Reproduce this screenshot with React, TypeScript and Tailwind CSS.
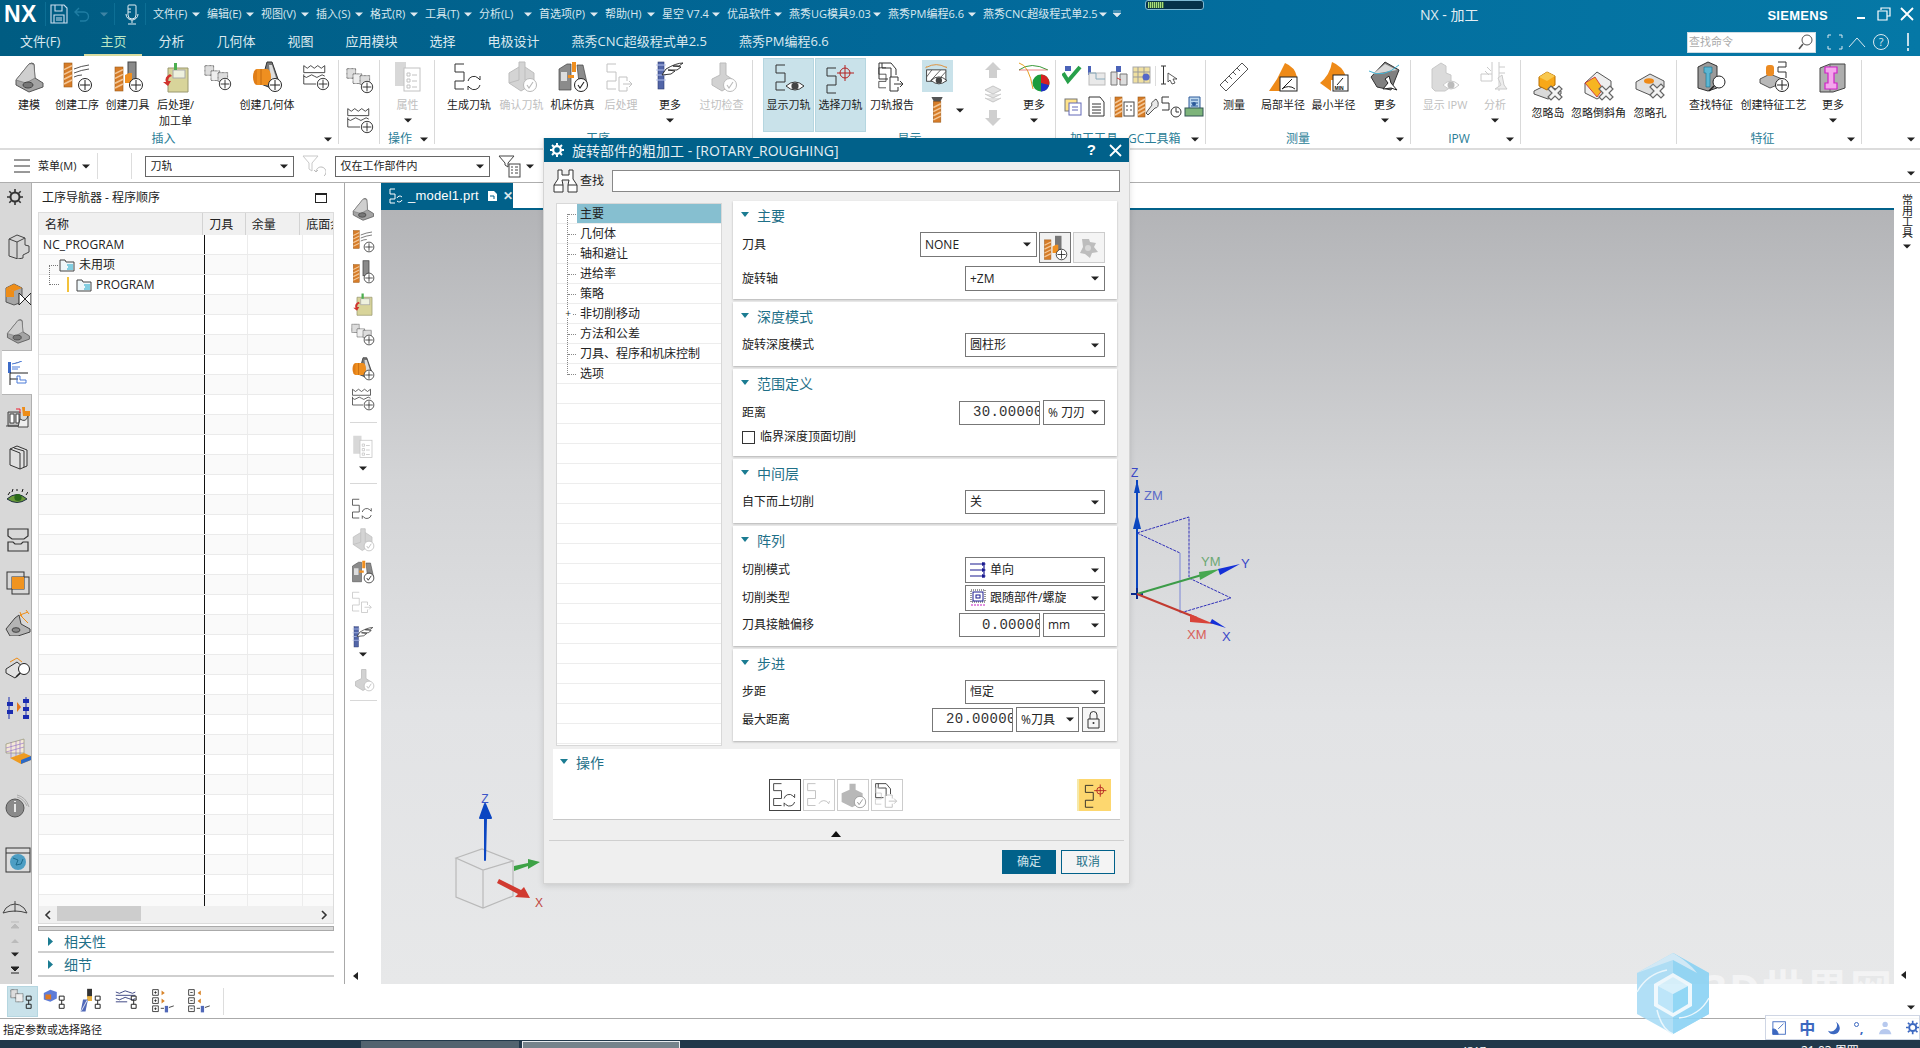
import React from "react";

type C = { children?: React.ReactNode };
const S = ({ children, s = 32, box = 32 }: C & { s?: number; box?: number }) => (
  <svg width={s} height={s} viewBox={`0 0 ${box} ${box}`} className="block shrink-0">{children}</svg>
);
const Plus = ({ x = 24, y = 24, r = 6.5 }: { x?: number; y?: number; r?: number }) => (
  <g>
    <circle cx={x} cy={y} r={r} fill="#fff" stroke="#222" strokeWidth="1" />
    <path d={`M${x} ${y - r + 1.5}v${2 * r - 3}M${x - r + 1.5} ${y}h${2 * r - 3}`} stroke="#222" strokeWidth="1" />
  </g>
);
const Check = ({ x = 24, y = 24, r = 6.5, c = "#222" }: { x?: number; y?: number; r?: number; c?: string }) => (
  <g>
    <circle cx={x} cy={y} r={r} fill="#fff" stroke={c} strokeWidth="1" />
    <path d={`M${x - 3} ${y}l2 3l4 -6`} stroke={c} fill="none" strokeWidth="1.1" />
  </g>
);
const X = ({ x = 23, y = 23 }: { x?: number; y?: number }) => (
  <path transform={`translate(${x} ${y})`} d="M-7 -4l3-3l4 4l4-4l3 3l-4 4l4 4l-3 3l-4-4l-4 4l-3-3l4-4z" fill="#f4f4f4" stroke="#666" strokeWidth="1.2" />
);
const Mill = ({ x = 3, y = 2, w = 8, h = 24 }: { x?: number; y?: number; w?: number; h?: number }) => (
  <g>
    <rect x={x} y={y} width={w} height={h} fill="#d67c28" stroke="#9a5a1a" strokeWidth=".6" />
    {[0.15, 0.35, 0.55, 0.75].map((k) => (
      <path key={k} d={`M${x} ${y + h * k + 3}L${x + w} ${y + h * k - 1}`} stroke="#f3c796" strokeWidth="1.6" />
    ))}
  </g>
);
const Snake = ({ x = 0, y = 0, c = "#333", k = 1 }: { x?: number; y?: number; c?: string; k?: number }) => (
  <path transform={`translate(${x} ${y}) scale(${k})`} d="M10 1H1v8h9v9H1v8h9" fill="none" stroke={c} strokeWidth="1" />
);
const Refresh = ({ c = "#333" }: { c?: string }) => (
  <path d="M15 20a6 6 0 0 1 10-3l2 2v-4M27 24a6 6 0 0 1-10 3l-2-2v4" fill="none" stroke={c} strokeWidth="1" />
);
const Eye = ({ x = 22, y = 23 }: { x?: number; y?: number }) => (
  <g>
    <path d={`M${x - 9} ${y}q9-8 18 0q-9 8-18 0z`} fill="#fff" stroke="#333" strokeWidth="1" />
    <circle cx={x} cy={y} r="3.6" fill="#444" />
  </g>
);
const DocArrow = ({ c = "#333" }: { c?: string }) => (
  <g fill="none" stroke={c} strokeWidth="1">
    <path d="M14 16h8v4M14 16v14h8v-4M18 23h9l-3-3M27 23l-3 3" />
  </g>
);
const Sheets = () => (
  <g stroke="#333" strokeWidth=".8" strokeDasharray="1 .5">
    <rect x="1" y="3" width="10" height="11" fill="#ddd" />
    <rect x="8" y="9" width="10" height="11" fill="#eee" />
    <rect x="16" y="11" width="11" height="10" fill="#ddd" />
  </g>
);
const Crown = () => (
  <g fill="none" stroke="#333" strokeWidth="1">
    <path d="M2 3l4 3l4-3l4 3l4-3l4 3l4-3v8H2z" fill="#fff" />
    <path d="M2 15q3 3 6 0t6 0t6 0t6 0M2 13v11h14" />
  </g>
);
const Bracket = () => (
  <g>
    <path d="M3 19L16 3q3-2 5 0l1 14l8 5v4l-14 5L3 24z" fill="#a4a4a4" stroke="#555" />
    <path d="M16 3q3-1 5 1l1 13l-9 5l-10-3z" fill="#cfcfcf" stroke="#666" strokeWidth=".6" />
    <ellipse cx="15" cy="24" rx="5" ry="3" fill="#777" stroke="#444" />
  </g>
);
const Post = () => (
  <g>
    <path d="M8 7h20v24H8z" fill="#d8d49a" stroke="#9a9870" />
    <rect x="13" y="9" width="12" height="8" fill="#eef1de" stroke="#aaa" />
    <path d="M14 2h3v7h-3z" fill="#4caf50" />
    <path d="M10 13q-6 3-4 8h-3l5 4l3-5h-3q0-4 4-5z" fill="#d0332e" />
  </g>
);
const GeoBlock = () => (
  <g>
    <path d="M16 1l5 0l7 20l-8 6l-10-4z" fill="#777" stroke="#333" />
    <path d="M18 4l3 0l5 16l-6 3z" fill="#ddd" />
    <ellipse cx="6" cy="16" rx="4" ry="8" fill="#e07d17" />
    <path d="M6 8h10a4 8 0 0 1 0 16H6z" fill="#ef8f20" />
    <path d="M10 8v16" stroke="#c36a10" />
  </g>
);
const MachineDim = () => (
  <g fill="#d4d4d4" stroke="#bdbdbd">
    <path d="M3 12l10-6v-5h6v5l9 6v10l-13 8l-12-8z" />
    <path d="M13 6v13l-10 3M19 6v13l9 3" fill="none" />
  </g>
);
const Sim = () => (
  <g>
    <path d="M2 8l8-5h4v26H2zM20 4h6l4 18h-8z" fill="#8b8b8b" stroke="#444" strokeWidth=".7" />
    <rect x="4" y="11" width="6" height="9" fill="#ddd" />
    <rect x="15" y="1" width="4" height="10" fill="#ef8f20" />
    <rect x="11" y="14" width="6" height="3" fill="#ef8f20" />
  </g>
);
const BlueFan = () => (
  <g>
    <rect x="4" y="1" width="6" height="27" fill="#5265a8" stroke="#2d3a70" strokeWidth=".6" />
    {[4, 9, 14, 19].map((y) => <path key={y} d={`M2 ${y}H12`} stroke="#b7c4ee" strokeWidth="1" />)}
    <path d="M12 8q10-6 17-6l-4 3h-6q4 0 8 1l-4 3h-9l7 1l-4 3l-9 1z" fill="#fff" stroke="#222" strokeWidth=".9" />
  </g>
);
const Doc = () => (
  <g fill="none" stroke="#333" strokeWidth="1">
    <path d="M1 1h12l5 6v6M1 1v16h9" />
    <path d="M4 1v5h9v9" />
  </g>
);

const I: Record<string, React.ReactNode> = {
  model: <S><Bracket /></S>,
  op: <S><Mill /><path d="M13 8q7-3 15-4M13 12q7-3 15-4M13 16q4-2 8-2" stroke="#555" fill="none" /><Plus /></S>,
  tool: <S><Mill y={6} h={24} /><rect x="16" y="1" width="8" height="20" fill="#8a8a8a" stroke="#444" /><path d="M13 14l4-2h3v10h-7z" fill="#ef8f20" /><Plus /></S>,
  post: <S><Post /></S>,
  prog: <S s={28}><Sheets /><Plus /></S>,
  geom: <S><GeoBlock /><Plus /></S>,
  meth: <S s={28}><Crown /><Plus /></S>,
  attr: (
    <S><rect x="3" y="1" width="11" height="24" fill="#d8d8d8" /><g fill="#fff" stroke="#c2c2c2"><rect x="12" y="7" width="16" height="23" /><path d="M15 12h3v3h-3zM15 18h3v3h-3zM15 24h3v3h-3zM20 14h5M20 20h5M20 26h5" /></g></S>
  ),
  gen: <S><Snake x={1} y={2} /><Refresh /></S>,
  confirm: <S><MachineDim /><Check c="#b8b8b8" /></S>,
  sim: <S><Sim /><Check /></S>,
  postDim: <S><Snake x={1} y={2} c="#c2c2c2" /><DocArrow c="#c2c2c2" /></S>,
  more: <S><BlueFan /></S>,
  over: <S><path d="M6 18l8-4V2h6v12l6 4v6l-10 6l-10-6z" fill="#d2d2d2" stroke="#bbb" /><Check c="#bbb" /></S>,
  show: <S><Snake x={2} y={1} /><Eye /></S>,
  select: (
    <S><Snake x={1} y={4} />
      <circle cx="20" cy="10" r="5" fill="none" stroke="#b32020" /><path d="M20 2v16M12 10h17" stroke="#b32020" /></S>
  ),
  report: <S><g transform="translate(2 1)"><Doc /></g><Snake x={2} y={6} k={.8} /><DocArrow /></S>,
  hatch: (
    <S s={28}><rect x="3" y="9" width="22" height="13" fill="#fff" stroke="#333" /><path d="M3 17l6-8M7 22l12-13M15 22l10-11" stroke="#555" /><path d="M3 6q11 -6 22 0" stroke="#e0892b" fill="none" /><path d="M3 5l-1 2M25 5l1 2" stroke="#e0892b" /><Eye x={17} y={21} /></S>
  ),
  mill: <S s={30}><path d="M9 2h12l-3 6h-6z" fill="#555" /><Mill x={11} y={7} w={8} h={22} /></S>,
  up: <svg width="20" height="18" viewBox="0 0 20 18" className="block"><path d="M10 1l8 8h-4v8H6V9H2z" fill="#cfcfcf" /></svg>,
  layers: <svg width="20" height="18" viewBox="0 0 20 18" className="block"><path d="M10 1l8 4l-8 4l-8-4zM2 9l8 4l8-4M2 13l8 4l8-4" fill="#e2e2e2" stroke="#c6c6c6" /></svg>,
  down: <svg width="20" height="18" viewBox="0 0 20 18" className="block"><path d="M6 1h8v8h4l-8 8l-8-8h4z" fill="#cfcfcf" /></svg>,
  pie: <S><path d="M1 9q12-9 29 0" stroke="#3a9a3a" fill="none" /><path d="M1 2q10 2 14 26" stroke="#e8a020" fill="none" /><path d="M1 9h28" stroke="#d33" strokeWidth=".6" /><circle cx="23" cy="22" r="8.5" fill="#1c9c3c" /><path d="M23 22V13.5a8.5 8.5 0 0 1 8 11z" fill="#d62020" /><path d="M23 22l8 2a8.5 8.5 0 0 1-8 6.5z" fill="#2030c8" /></S>,
  ruler: <S><path d="M2 24L24 2l6 6L8 30z" fill="#fff" stroke="#555" /><path d="M7 19l3 3M11 15l3 3M15 11l3 3M19 7l3 3" stroke="#555" /></S>,
  local: <S><path d="M18 2q10 4 12 14l-12 14H2l8-12z" fill="#ee8a18" /><rect x="13" y="16" width="17" height="14" fill="#fff" stroke="#222" /><path d="M15 28l10-10M15 28a10 10 0 0 1 13 0" fill="none" stroke="#222" /></S>,
  minR: <S><path d="M14 1q10 4 14 14v4H13v11L2 22q10-8 12-21z" fill="#ee8a18" /><rect x="15" y="14" width="15" height="16" fill="#fff" stroke="#222" /><path d="M19 24l6-7" stroke="#222" /><text x="16.5" y="29" fontSize="5" fontWeight="700" fill="#111" fontFamily="Liberation Sans">MIN</text></S>,
  analyze: <S><path d="M2 16L16 1l14 8l-8 20l-14-3z" fill="#808080" stroke="#333" /><path d="M4 13l12-10l12 6" fill="#d8d8d8" /><path d="M0 10q14 8 30-6" stroke="#45b3d3" fill="none" /><path d="M14 28l8-1l6 2l-6-7l-2-7l-4 3l3 4z" fill="#fff" stroke="#222" /></S>,
  ipwShow: <S><path d="M3 8l9-6l5 3v7l5 2v12l-6 4H6l-3-3z" fill="#dbdbdb" stroke="#c8c8c8" /><path d="M14 24q8-8 16 0q-8 8-16 0z" fill="#fff" stroke="#c9c9c9" /><circle cx="22" cy="24" r="3.5" fill="#bcbcbc" /></S>,
  ipwAn: <S><g fill="none" stroke="#cacaca"><path d="M2 13h11v7H2zM13 1v12M20 1v29M26 6h-6M26 12h-6M8 6l4 4M6 10l4 4" /><path d="M16 28h12l-3-4l-2-10l-4 3l3 7z" fill="#ededed" /></g></S>,
  island: <S><path d="M2 22l12-6l15 6v3l-13 5L2 25z" fill="#dadada" stroke="#555" /><path d="M7 8l8-5l8 4v9l-8 5l-8-4z" fill="#f8a818" stroke="#b86e00" /><path d="M7 8l8 4l8-5l-8-4z" fill="#f8c850" /><X x={23} y={24} /></S>,
  chamfer: <S><path d="M2 14l12-11l14 9v10L14 30L2 24z" fill="#eee" stroke="#555" /><path d="M2 14l10-6l8 12l-6 8z" fill="#f6b522" stroke="#c23" strokeWidth=".8" /><X x={23} y={24} /></S>,
  hole: <S><path d="M2 13l14-8l14 7v6l-14 8L2 20z" fill="#dfdfdf" stroke="#555" /><ellipse cx="15" cy="12" rx="5" ry="2.8" fill="#ee8a18" /><X x={23} y={22} /></S>,
  find: <S><path d="M3 6l10-5l9 4v22l-9 3L3 27z" fill="#9a9a9a" stroke="#333" /><path d="M9 6h8v6h-2v14h-4V12H9z" fill="#5cb6d3" stroke="#16708a" strokeWidth=".6" /><circle cx="24" cy="21" r="6" fill="#fff" stroke="#222" /><path d="M19 25l-5 5" stroke="#222" strokeWidth="1.6" /></S>,
  featPlan: <S><path d="M2 18l10-5l12 5v4l-12 5L2 22z" fill="#b8b8b8" stroke="#555" /><rect x="8" y="4" width="8" height="11" rx="3" fill="#ec8b22" /><path d="M20 1h8v5h-8v5h8v6" fill="none" stroke="#333" /><Plus y={24} /></S>,
  featMore: <S><path d="M3 7l10-4h15v24L16 31H3z" fill="#aeaeae" stroke="#444" /><path d="M13 3v28" stroke="#666" /><path d="M8 6h12v6h-3v10h3v6H8v-6h3V12H8z" fill="#f4a6ec" stroke="#d020c8" strokeWidth="1.2" /></S>,
  smCheck: <S s={22} box={22}><path d="M1 8l5 8l12-14" fill="none" stroke="#27a04a" strokeWidth="4" /><rect x="3" y="1" width="6" height="5" fill="#4b63b8" /></S>,
  smA: <S s={22} box={22}><rect x="3" y="1" width="3" height="9" fill="#4b63b8" /><rect x="4" y="8" width="16" height="12" fill="#e9e9e9" stroke="#bbb" /><path d="M4 8h7v6h9" fill="none" stroke="#8ab" /></S>,
  smB: <S s={22} box={22}><rect x="8" y="1" width="5" height="6" fill="#4b63b8" /><path d="M3 7h6v13H3zM12 9h7v11h-7z" fill="#ddd" stroke="#777" /><path d="M9 13l4 2" stroke="#c33" /></S>,
  smC: <S s={22} box={22}><g stroke="#aaa" fill="#f0e0a0"><rect x="2" y="2" width="17" height="16" /></g><path d="M2 7h17M2 12h17M7 2v16M13 2v16" stroke="#999" /><circle cx="15" cy="12" r="3.5" fill="#5568c8" /></S>,
  smCursor: <S s={22} box={22}><path d="M3 1h5M5.5 1v18M3 19h5" stroke="#333" /><path d="M10 8l9 6h-4l2 4l-3 1l-2-4l-2 2z" fill="#fff" stroke="#333" strokeWidth=".8" /></S>,
  smD: <S s={22} box={22}><rect x="3" y="3" width="12" height="12" fill="#ffe38a" stroke="#777" /><rect x="7" y="7" width="12" height="12" fill="#fff" stroke="#6268b8" /><path d="M10 11h6M10 14h6" stroke="#6268b8" /></S>,
  smE: <S s={22} box={22}><path d="M4 1h11l4 5v14H4z" fill="#fff" stroke="#333" /><path d="M7 8h9M7 11h9M7 14h9M7 17h9" stroke="#333" /></S>,
  smF: <S s={22} box={22}><Mill x={1} y={1} w={7} h={20} /><g stroke="#444"><rect x="10" y="6" width="10" height="14" fill="#fff" /><path d="M12 10h2M16 10h2M12 14h2M16 14h2" /></g></S>,
  smG: <S s={22} box={22}><Mill x={1} y={1} w={7} h={20} /><path d="M19 3q-6 4-4 6l-6 8l2 2l7-7q4 0 3-6z" fill="#e8e8e8" stroke="#555" /></S>,
  smH: <S s={22} box={22}><path d="M9 1H2v6h7v7H2" fill="none" stroke="#333" /><circle cx="16" cy="16" r="5" fill="#fff" stroke="#333" /><path d="M16 12v4h3" stroke="#333" fill="none" /></S>,
  smI: <S s={22} box={22}><path d="M6 1h11v14H6z" fill="#bcd7ee" stroke="#2c5a9a" /><path d="M8 4h7M8 7h7M8 10h7" stroke="#2c5a9a" /><rect x="2" y="12" width="18" height="8" fill="#7db47a" stroke="#355" /><circle cx="11" cy="8" r="2" fill="#2c5a9a" /></S>,
  filter1: <S s={24} box={24}><path d="M1 2h15l-6 7v8l-3-2V9z" fill="none" stroke="#c9c9c9" /><path d="M22 22a5 5 0 1 0-8-4l-2-2m2 2l2-2" fill="none" stroke="#bbb" /></S>,
  filter2: <S s={24} box={24}><path d="M1 2h15l-6 7v4l-3-2V9z" fill="#fff" stroke="#444" /><rect x="11" y="10" width="11" height="13" fill="#fff" stroke="#444" /><path d="M13 13h2M13 16h2M13 19h2M17 13h3M17 16h3M17 19h3" stroke="#444" /></S>,
};

const Caret = ({ c = "#222" }: { c?: string }) => (
  <svg width="8" height="5" viewBox="0 0 8 5" className="block shrink-0"><path d="M0 .5h8l-4 4z" fill={c} /></svg>
);
const Tri = () => (
  <svg width="8" height="6" viewBox="0 0 8 6" className="block shrink-0"><path d="M0 0h8l-4 5z" fill="#1b7c92" /></svg>
);

const Tool = ({ label, icon, cls, dim, caret, active, two }: { label: string; icon: React.ReactNode; cls: string; dim?: boolean; caret?: boolean; active?: boolean; two?: string }) => (
  <div className={`flex flex-col items-center pt-[1px] h-[74px] ${cls} ${active ? "bg-[#c9e2ea] border border-[#b5d6e0]" : ""}`}>
    <div className={`${active ? "h-[37px]" : "h-[40px]"} flex items-center justify-center`}>{icon}</div>
    <div className={`leading-[16px] whitespace-nowrap ${dim ? "text-[#c0c0c0]" : "text-[#222]"}`}>{label}</div>
    {two && <div className="leading-[16px] whitespace-nowrap text-[#222]">{two}</div>}
    {caret && <div className="mt-[5px]"><Caret /></div>}
  </div>
);

const Group = ({ cls, label, labelCls, caret, children }: C & { cls: string; label?: string; labelCls?: string; caret?: boolean }) => (
  <div className={`relative flex flex-col h-full ${cls}`}>
    <div className="flex flex-1 min-h-0">{children}</div>
    <div className={`h-[18px] shrink-0 flex items-center relative ${labelCls ?? "justify-center"}`}>
      {label && <span className="text-[#2a7d96] text-[12px] leading-[16px] whitespace-nowrap">{label}</span>}
      {caret && <span className="absolute right-[7px] top-[7px]"><Caret /></span>}
    </div>
    <span className="absolute right-0 top-[4px] bottom-[4px] w-[1px] bg-[#d9d9d9]" />
  </div>
);

const Ribbon = () => (
  <div className="h-[94px] bg-white border-b-2 border-[#dcdcdc] flex text-[11px] shrink-0">
    <Group cls="w-[339px] pl-[6px]" label="插入" labelCls="justify-center pr-[18px]" caret>
      <Tool cls="w-[46px]" icon={I.model} label="建模" />
      <Tool cls="w-[50px]" icon={I.op} label="创建工序" />
      <Tool cls="w-[51px]" icon={I.tool} label="创建刀具" />
      <Tool cls="w-[45px]" icon={I.post} label="后处理/" two="加工单" />
      <Tool cls="w-[40px]" icon={I.prog} label="" />
      <Tool cls="w-[58px]" icon={I.geom} label="创建几何体" />
      <Tool cls="w-[40px]" icon={I.meth} label="" />
    </Group>
    <Group cls="w-[41px]">
      <div className="w-full flex flex-col items-center pt-[10px] gap-[12px]">{I.prog}{I.meth}</div>
    </Group>
    <Group cls="w-[55px]" label="操作" labelCls="pl-[8px]" caret>
      <Tool cls="w-full" icon={I.attr} label="属性" dim caret />
    </Group>
    <Group cls="w-[318px] pl-[8px]" label="工序">
      <Tool cls="w-[52px]" icon={I.gen} label="生成刀轨" />
      <Tool cls="w-[53px]" icon={I.confirm} label="确认刀轨" dim />
      <Tool cls="w-[49px]" icon={I.sim} label="机床仿真" />
      <Tool cls="w-[48px]" icon={I.postDim} label="后处理" dim />
      <Tool cls="w-[50px]" icon={I.more} label="更多" caret />
      <Tool cls="w-[53px]" icon={I.over} label="过切检查" dim />
    </Group>
    <Group cls="w-[303px] pl-[10px]" label="显示">
      <Tool cls="w-[51px] mt-[2px]" icon={I.show} label="显示刀轨" active />
      <Tool cls="w-[51px] ml-[1px] mt-[2px]" icon={I.select} label="选择刀轨" active />
      <Tool cls="w-[52px]" icon={I.report} label="刀轨报告" />
      <div className="w-[35px] ml-[4px] pt-[4px] flex flex-col items-start">
        <div className="w-[31px] h-[32px] bg-[#c9e2ea] flex items-center justify-center">{I.hatch}</div>
        <div className="mt-[3px] ml-[1px] flex items-center gap-[2px]">{I.mill}<span className="ml-[1px]"><Caret /></span></div>
      </div>
      <div className="w-[38px] flex flex-col items-center pt-[5px] ml-[17px] gap-[6px]">{I.up}{I.layers}{I.down}</div>
      <Tool cls="w-[44px]" icon={I.pie} label="更多" caret />
    </Group>
    <Group cls="w-[150px] pl-[6px]" label="加工工具 - GC工具箱" labelCls="pl-[8px]" caret>
      <div className="flex flex-col gap-[9px] pt-[9px]">
        <div className="flex items-center gap-[1px]">{I.smCheck}{I.smA}{I.smB}{I.smC}<span className="w-[1px] h-[20px] bg-[#ddd] mx-[1px]" />{I.smCursor}</div>
        <div className="flex items-center gap-[1px]">{I.smD}{I.smE}<span className="w-[1px] h-[20px] bg-[#ddd] mx-[2px]" />{I.smF}{I.smG}{I.smH}{I.smI}</div>
      </div>
    </Group>
    <Group cls="w-[205px] pl-[3px]" label="测量" labelCls="pr-[24px] justify-center" caret>
      <Tool cls="w-[50px]" icon={I.ruler} label="测量" />
      <Tool cls="w-[48px]" icon={I.local} label="局部半径" />
      <Tool cls="w-[53px]" icon={I.minR} label="最小半径" />
      <Tool cls="w-[50px]" icon={I.analyze} label="更多" caret />
    </Group>
    <Group cls="w-[110px] pl-[4px]" label="IPW" labelCls="justify-center pr-[18px]" caret>
      <Tool cls="w-[60px]" icon={I.ipwShow} label="显示 IPW" dim />
      <Tool cls="w-[40px]" icon={I.ipwAn} label="分析" dim caret />
    </Group>
    <Group cls="w-[156px] pl-[3px]">
      {[["w-[48px]", I.island, "忽略岛"], ["w-[53px]", I.chamfer, "忽略倒斜角"], ["w-[50px]", I.hole, "忽略孔"]].map(([c, ic, l], i) => (
        <Tool key={i} cls={`${c} pt-[9px]`} icon={ic} label={l as string} />
      ))}
    </Group>
    <Group cls="w-[185px] pl-[4px]" label="特征" labelCls="justify-center pr-[18px]" caret>
      <Tool cls="w-[60px]" icon={I.find} label="查找特征" />
      <Tool cls="w-[65px]" icon={I.featPlan} label="创建特征工艺" />
      <Tool cls="w-[54px]" icon={I.featMore} label="更多" caret />
    </Group>
    <div className="flex-1 flex items-end justify-end pr-[5px] pb-[6px]"><Caret /></div>
  </div>
);

const menu: [string, string][] = [
  ["文件(F)", "w-[54px]"], ["编辑(E)", "w-[54px]"], ["视图(V)", "w-[55px]"], ["插入(S)", "w-[54px]"], ["格式(R)", "w-[55px]"],
  ["工具(T)", "w-[54px]"], ["分析(L)", "w-[60px]"], ["首选项(P)", "w-[66px]"], ["帮助(H)", "w-[57px]"], ["星空 V7.4", "w-[65px]"],
  ["优品软件", "w-[62px]"], ["燕秀UG模具9.03", "w-[99px]"], ["燕秀PM编程6.6", "w-[95px]"], ["燕秀CNC超级程式单2.5", "w-[131px]"],
];

const Header = () => (
  <div className="h-[56px] shrink-0 bg-[linear-gradient(90deg,#005c82,#02699a_50%,#0578a6)] text-white flex flex-col">
    <div className="h-[28px] flex items-center">
      <div className="font-['Liberation_Sans',sans-serif] font-bold text-[23px] w-[36px] ml-[4px] leading-none tracking-[0.5px]">NX</div>
      <span className="w-[1px] h-[24px] bg-[#0d6f95] ml-[5px]" />
      <svg width="18" height="20" viewBox="0 0 18 20" className="ml-[4px]"><path d="M1 1h13l3 3v15H1z M5 1v6h7V1M4 19v-8h10v8M6 14h6M6 16h6" fill="none" stroke="#cde" strokeWidth="1.1" /></svg>
      <svg width="16" height="16" viewBox="0 0 16 16" className="ml-[6px]"><path d="M5 2L1 6l4 4M1 6h9a4 4 0 0 1 0 9H6" fill="none" stroke="#1f7da3" strokeWidth="1.4" /></svg>
      <span className="ml-[10px] opacity-30"><Caret c="#cde" /></span>
      <span className="w-[1px] h-[22px] bg-[#0d6f95] ml-[6px]" />
      <svg width="14" height="22" viewBox="0 0 14 22" className="ml-[10px]"><path d="M4 2h6a1 1 0 0 1 1 1v9a4 4 0 0 1-8 0V3a1 1 0 0 1 1-1zM1 11a6 6 0 0 0 12 0M7 17v3M3 21h8M3 6h3M3 9h3" fill="none" stroke="#e4eef3" /></svg>
      <span className="w-[1px] h-[22px] bg-[#0d6f95] ml-[6px]" />
      <div className="flex text-[11px] ml-[7px] text-[#d8e8ef]">
        {menu.map(([t, w]) => (
          <div key={t} className={`${w} flex items-center justify-between pr-[7px] whitespace-nowrap`}>
            <span>{t}</span><Caret c="#dfeaf0" />
          </div>
        ))}
      </div>
      <svg width="9" height="9" viewBox="0 0 9 9" className="-ml-[1px]"><path d="M0 1h8M0 3l4 4l4-4z" stroke="#dfeaf0" fill="#dfeaf0" strokeWidth=".6" /></svg>
      <div className="ml-[23px] -mt-[18px] w-[59px] h-[10px] rounded-[3px] bg-[#06324a] border border-[#7fb9d3] flex items-center pl-[2px]">
        <div className="w-[16px] h-[6px] bg-[repeating-linear-gradient(90deg,#a9de7d_0_1px,#3d6f40_1px_2px)]" />
      </div>
      <span className="ml-[216px] text-[14px] text-[#e3eef3] whitespace-nowrap">NX - 加工</span>
      <span className="ml-auto font-['Liberation_Sans',sans-serif] font-bold text-[13px] tracking-[0.3px] text-white mr-[25px] mt-[3px]">SIEMENS</span>
      <div className="flex items-center gap-[7px] mr-[5px]">
        <svg width="16" height="14" viewBox="0 0 16 14"><path d="M4 11h8" stroke="#fff" strokeWidth="2" /></svg>
        <svg width="16" height="14" viewBox="0 0 16 14"><path d="M5 3V1h9v8h-3M2 4h9v9H2z" fill="none" stroke="#fff" strokeWidth="1.2" /></svg>
        <svg width="16" height="16" viewBox="0 0 16 16"><path d="M2 2l12 12M14 2L2 14" stroke="#fff" strokeWidth="1.8" /></svg>
      </div>
    </div>
    <div className="h-[28px] flex items-center text-[13px] text-[#dbe9ef]">
      <span className="ml-[20px] mr-[40px]">文件(F)</span>
      <div className="flex gap-[32px] items-center">
        <span className="-mx-[16px] px-[16px] h-[28px] leading-[26px] border-b-[2px] border-[#d8dca0] text-[#b9e6c5]">主页</span>
        <span>分析</span><span>几何体</span><span>视图</span><span>应用模块</span><span>选择</span><span>电极设计</span><span>燕秀CNC超级程式单2.5</span><span>燕秀PM编程6.6</span>
      </div>
      <div className="ml-auto flex items-center mr-[6px]">
        <div className="w-[129px] h-[21px] bg-white flex items-center justify-between px-[1px] text-[11px] text-[#aaa] border border-[#cfdde4]">
          <span>查找命令</span>
          <svg width="17" height="17" viewBox="0 0 17 17"><circle cx="10" cy="6" r="5" fill="none" stroke="#555" /><path d="M6 10l-4 5" stroke="#555" strokeWidth="1.6" /></svg>
        </div>
        <svg width="20" height="20" viewBox="0 0 20 20" className="ml-[9px]"><path d="M6 3H3v3M14 3h3v3M6 17H3v-3M14 17h3v-3" fill="none" stroke="#dceaf0" /></svg>
        <svg width="18" height="12" viewBox="0 0 18 12" className="ml-[3px]"><path d="M1 11l8-9l8 9" fill="none" stroke="#dceaf0" /></svg>
        <svg width="18" height="18" viewBox="0 0 18 18" className="ml-[6px]"><circle cx="9" cy="9" r="7.5" fill="none" stroke="#dceaf0" /><text x="9" y="13" textAnchor="middle" fontSize="11" fill="#dceaf0">?</text></svg>
        <svg width="6" height="20" viewBox="0 0 6 20" className="ml-[15px] mr-[3px]"><path d="M3 1v13M3 16v3" stroke="#f4f8fa" strokeWidth="1.6" /></svg>
      </div>
    </div>
  </div>
);

const Toolbar = () => (
  <div className="h-[33px] shrink-0 bg-white border-b border-[#aeaeae] flex items-center text-[11px] text-[#222] relative">
    <svg width="16" height="14" viewBox="0 0 16 14" className="ml-[14px]"><path d="M0 1h16M0 7h16M0 13h16" stroke="#333" /></svg>
    <span className="ml-[8px]">菜单(M)</span>
    <span className="ml-[6px]"><Caret /></span>
    <span className="w-[1px] h-[26px] bg-[#ddd] ml-[7px]" />
    <span className="w-[1px] h-[26px] bg-[#ddd] ml-[33px]" />
    <Sel cls="w-[149px] h-[21px] ml-[13px] border-[#666]" text="刀轨" />
    <span className="ml-[8px]">{I.filter1}</span>
    <Sel cls="w-[155px] h-[21px] ml-[9px] border-[#666]" text="仅在工作部件内" />
    <span className="ml-[8px]">{I.filter2}</span>
    <span className="ml-[4px]"><Caret /></span>
    <span className="absolute right-[5px] top-[21px]"><Caret /></span>
  </div>
);

const Sel = ({ cls, text, icon }: { cls: string; text: string; icon?: React.ReactNode }) => (
  <div className={`bg-white border flex items-center justify-between pl-[4px] pr-[5px] shrink-0 ${cls}`}>
    <span className="flex items-center gap-[4px] whitespace-nowrap overflow-hidden">{icon}{text}</span>
    <Caret />
  </div>
);

const leftIcons: { n: React.ReactNode; cls: string }[] = [
  { cls: "mt-[6px]", n: <svg width="16" height="16" viewBox="0 0 16 16" className="ml-[7px]"><circle cx="8" cy="8" r="4.5" fill="none" stroke="#333" strokeWidth="2" /><path d="M8 0v3M8 13v3M0 8h3M13 8h3M2.3 2.3l2 2M11.7 11.7l2 2M13.7 2.3l-2 2M4.3 11.7l-2 2" stroke="#333" strokeWidth="1.6" /></svg> },
  { cls: "mt-[28px]", n: <svg width="22" height="26" viewBox="0 0 22 26" className="ml-[8px]"><path d="M1 6l8-4l8 3v7l4 1v6l-6 3v3l-5 1l-9-3z" fill="#d5d5d5" stroke="#444" /><path d="M1 6l8 3l8-4M9 9v16" stroke="#444" fill="none" /></svg> },
  { cls: "mt-[21px]", n: <svg width="26" height="26" viewBox="0 0 26 26" className="ml-[5px]"><path d="M1 8l8-4l8 4v14l-8 3l-8-3z" fill="#a6a6a6" stroke="#555" /><path d="M1 8l8-4l8 4l-8 3z" fill="#ee8d18" /><path d="M1 8l8 3v6H1z" fill="#ee8d18" /><path d="M14 13v12l12-12v12z" fill="#fff" stroke="#222" /></svg> },
  { cls: "mt-[12px]", n: <span className="block ml-[5px]"><S s={26}><Bracket /></S></span> },
  { cls: "mt-[6px] h-[45px] pt-[10px] bg-white -mr-[1px] border-y border-[#b5b5b5] relative ml-[2px]", n: <svg width="24" height="24" viewBox="0 0 24 24" className="ml-[5px]"><rect x="1" y="1" width="3" height="11" fill="#3c6bc8" /><path d="M5 3q6-1 10-3M5 6h8M5 8h6" stroke="#4a7ad8" /><path d="M3 12v12M3 18h8M3 12h18" stroke="#222" /><path d="M10 15h3v4h6v3h-9z" fill="none" stroke="#4a7ad8" /></svg> },
  { cls: "mt-[10px]", n: <svg width="24" height="24" viewBox="0 0 24 24" className="ml-[6px]"><path d="M2 7h12v14H2z" fill="#bbb" stroke="#444" /><path d="M4 9h4v9H4zM10 9h3v9h-3zM0 21h14" stroke="#444" fill="#fff" /><path d="M16 2h3v4h5v5h-7z" fill="#ee8d18" /><path d="M10 4h4v4" stroke="#e23" fill="none" /><path d="M14 14q6 4 8-3v11H12z" fill="#eee" stroke="#444" /></svg> },
  { cls: "mt-[15px]", n: <svg width="20" height="26" viewBox="0 0 20 26" className="ml-[9px]"><path d="M1 5l7-3l10 4v16l-7 3l-10-4z" fill="#e0e0e0" stroke="#333" /><path d="M1 5l10 4v16M5 4l10 3v16" fill="none" stroke="#333" /></svg> },
  { cls: "mt-[19px]", n: <svg width="22" height="16" viewBox="0 0 22 16" className="ml-[6px]"><path d="M1 10q10-9 20 0q-10 7-20 0z" fill="#6a9a3a" stroke="#234" /><circle cx="12" cy="8.5" r="3.6" fill="#2a6a1a" /><path d="M2 6l2-3M6 3l1-3M11 2V0M16 3l1-3M20 6l2-3" stroke="#111" /></svg> },
  { cls: "mt-[23px]", n: <svg width="22" height="24" viewBox="0 0 22 24" className="ml-[7px]"><path d="M1 1h20v7l-4 3H5L1 8zM1 14h5l2 2h6l2-2h5v9H1z" fill="none" stroke="#333" strokeWidth="1.2" /></svg> },
  { cls: "mt-[19px]", n: <svg width="24" height="24" viewBox="0 0 24 24" className="ml-[6px]"><rect x="1" y="1" width="17" height="17" fill="none" stroke="#333" /><rect x="6" y="6" width="17" height="17" fill="none" stroke="#333" /><rect x="6" y="6" width="12" height="12" fill="#f09420" /></svg> },
  { cls: "mt-[15px]", n: <svg width="26" height="26" viewBox="0 0 26 26" className="ml-[5px]"><path d="M1 19L10 8l4-3l2 9l9 5v3l-12 4H5z" fill="#b5b5b5" stroke="#444" /><ellipse cx="11" cy="20" rx="4" ry="2.3" fill="#888" stroke="#444" /><path d="M15 5l8-3M15 5l8 8M15 2l2 5M21 0l3 4" stroke="#ee8d18" fill="none" /></svg> },
  { cls: "mt-[19px]", n: <svg width="26" height="24" viewBox="0 0 26 24" className="ml-[5px]"><path d="M1 14l11-7l6 5v4l-8 7l-9-5z" fill="#e2e2e2" stroke="#333" /><path d="M5 7l7-4l5 4" stroke="#ee8d18" fill="none" /><circle cx="19" cy="14" r="5.5" fill="#fff" stroke="#222" /><path d="M15 18l-4 4" stroke="#222" strokeWidth="1.5" /></svg> },
  { cls: "mt-[17px]", n: <svg width="24" height="24" viewBox="0 0 24 24" className="ml-[6px]"><g fill="#1a2cb0"><rect x="1" y="6" width="6" height="4" /><rect x="1" y="14" width="6" height="4" /><rect x="17" y="3" width="6" height="4" /><rect x="17" y="11" width="6" height="4" /><rect x="17" y="19" width="6" height="4" /></g><path d="M3 1v22M20 1v22" stroke="#1a2cb0" /><path d="M11 6l4 5l-4 5z" fill="#e4761c" /></svg> },
  { cls: "mt-[18px]", n: <svg width="26" height="26" viewBox="0 0 26 26" className="ml-[5px]"><path d="M1 6l18-5v14H1z" fill="#f4e8d8" stroke="#886" strokeWidth=".6" /><path d="M1 10l18-5M1 14l18-5M6 4v16M11 3v16M15 2v16" stroke="#8a6ac8" strokeWidth=".6" /><path d="M5 20l14-5l7 3v4l-10 4z" fill="#ee9b20" /><path d="M16 26l10-4v-4l-10 4z" fill="#2c6ac8" /></svg> },
  { cls: "mt-[29px]", n: <svg width="26" height="26" viewBox="0 0 26 26" className="ml-[5px]"><circle cx="10" cy="15" r="9" fill="#8a8a8a" stroke="#555" /><path d="M10 11v8M10 8v1" stroke="#fff" strokeWidth="1.6" /><path d="M12 2q9 2 12 12M12 4q7 2 10 9" fill="none" stroke="#aaa" /></svg> },
  { cls: "mt-[28px]", n: <svg width="26" height="26" viewBox="0 0 26 26" className="ml-[5px]"><rect x="1" y="1" width="24" height="24" fill="#ddd" stroke="#333" /><path d="M1 6h24" stroke="#333" /><circle cx="13" cy="15" r="8" fill="#4d9ec4" /><path d="M8 11l5 2l-2 5l5-1l2-5" stroke="#1c6a8c" fill="none" /></svg> },
  { cls: "mt-[27px]", n: <svg width="26" height="16" viewBox="0 0 26 16" className="ml-[2px]"><path d="M1 13L4 8q9-8 18 0l3 5q-12-4-24 0zM13 1v11" fill="none" stroke="#444" /></svg> },
];

const LeftBar = () => (
  <div className="w-[32px] shrink-0 bg-[#d8d8d8] border-r border-[#b0b0b0] flex flex-col relative">
    {leftIcons.map((x, i) => <div key={i} className={`shrink-0 ${x.cls}`}>{x.n}</div>)}
    <div className="flex flex-col items-center gap-[9px] pr-[2px] mt-[5px]">
      <svg width="8" height="8" viewBox="0 0 8 8"><path d="M0 1h8M0 7l4-4l4 4z" fill="#bbb" stroke="#bbb" /></svg>
      <svg width="8" height="5" viewBox="0 0 8 5"><path d="M0 5l4-4l4 4z" fill="#bbb" /></svg>
      <Caret />
      <svg width="8" height="8" viewBox="0 0 8 8"><path d="M0 1l4 4l4-4zM0 7h8" fill="#222" stroke="#222" /></svg>
    </div>
  </div>
);

const Folder = () => (
  <svg width="16" height="14" viewBox="0 0 16 14" className="block shrink-0"><path d="M1 2h5l1 2h8v9H1z" fill="#eef7fa" stroke="#444" /><path d="M8 7h6M9 9h5M8 11h6" stroke="#16a5c8" strokeWidth="1.1" /></svg>
);

const rows = Array.from({ length: 34 }, (_, i) => i);
const Nav = () => (
  <div className="w-[313px] shrink-0 bg-white flex flex-col text-[12px] text-[#222] border-r border-[#a8a8a8]">
    <div className="h-[29px] flex items-center justify-between pl-[10px] pr-[17px] shrink-0">
      <span className="text-[12px]">工序导航器 - 程序顺序</span>
      <span className="w-[12px] h-[10px] border border-[#222] border-t-[2px] block" />
    </div>
    <div className="ml-[6px] mr-[10px] flex-1 min-h-0 flex flex-col border border-[#dcdcdc]">
      <div className="h-[22px] shrink-0 flex bg-[#f0f0f0] leading-[24px]">
        <div className="w-[166px] border-r border-[#d3d3d3] pl-[6px]">名称</div>
        <div className="w-[43px] border-r border-[#d3d3d3] pl-[6px]">刀具</div>
        <div className="w-[55px] border-r border-[#d3d3d3] pl-[6px]">余量</div>
        <div className="w-[33px] pl-[6px] overflow-hidden whitespace-nowrap">底面余量</div>
      </div>
      <div className="flex-1 min-h-0 overflow-hidden relative">
        {rows.map((i) => (
          <div key={i} className={`h-[20px] flex border-b border-[#ebebeb] ${i % 2 ? "bg-[#fafafa]" : "bg-white"}`}>
            <div className="w-[166px] border-r-[1.5px] border-[#111] flex items-center">
              {i === 0 && <span className="pl-[4px] tracking-[0.1px]">NC_PROGRAM</span>}
              {i === 1 && <span className="flex items-center pl-[20px] gap-[4px]"><Folder />未用项</span>}
              {i === 2 && <span className="flex items-center pl-[28px]"><span className="w-[2px] h-[15px] bg-[#f3c23a] mr-[7px]" /><Folder /><span className="ml-[4px]">PROGRAM</span></span>}
            </div>
            <div className="w-[43px] border-r border-[#ececec]" />
            <div className="w-[55px] border-r border-[#ececec]" />
          </div>
        ))}
        <div className="absolute left-[10px] top-[30px] w-[9px] h-[1px] border-t border-dotted border-[#777]" />
        <div className="absolute left-[10px] top-[30px] h-[20px] w-[10px] border-l border-b border-dotted border-[#777]" />
      </div>
      <div className="h-[17px] shrink-0 bg-[#f0f0f0] flex items-center justify-between px-[5px] relative">
        <svg width="7" height="10" viewBox="0 0 7 10"><path d="M6 1L2 5l4 4" fill="none" stroke="#333" strokeWidth="1.6" /></svg>
        <span className="absolute left-[18px] top-0 w-[84px] h-[15px] bg-[#cdcdcd]" />
        <svg width="7" height="10" viewBox="0 0 7 10"><path d="M1 1l4 4l-4 4" fill="none" stroke="#333" strokeWidth="1.6" /></svg>
      </div>
    </div>
    <div className="ml-[6px] mr-[10px] mt-[2px] h-[5px] border border-[#aaa] bg-[#d8d8d8] shrink-0" />
    <div className="ml-[6px] mr-[10px] h-[22px] shrink-0 border-b-[2px] border-[#cfcfcf] flex items-center pl-[10px] gap-[11px] text-[14px] text-[#1f7088]">
      <svg width="5" height="9" viewBox="0 0 5 9"><path d="M0 0l5 4.5L0 9z" fill="#1b7c92" /></svg><span>相关性</span>
    </div>
    <div className="ml-[6px] mr-[10px] h-[24px] shrink-0 border-b-[2px] border-[#cfcfcf] flex items-center pl-[10px] gap-[11px] text-[14px] text-[#1f7088]">
      <svg width="5" height="9" viewBox="0 0 5 9"><path d="M0 0l5 4.5L0 9z" fill="#1b7c92" /></svg><span>细节</span>
    </div>
    <div className="h-[7px] shrink-0" />
  </div>
);

const Sep2 = ({ cls }: { cls: string }) => <div className={`w-[27px] h-[1px] bg-[#d8d8d8] shrink-0 ${cls}`} />;

const SecondBar = () => (
  <div className="w-[36px] shrink-0 bg-white flex flex-col items-center pt-[14px] relative">
    <S s={24}><Bracket /></S>
    <div className="mt-[8px]"><S s={24}><Mill /><path d="M13 8q7-3 15-4M13 12q7-3 15-4M13 16q4-2 8-2" stroke="#555" fill="none" /><Plus /></S></div>
    <div className="mt-[7px]"><S s={24}><Mill y={6} /><rect x="16" y="1" width="8" height="20" fill="#8a8a8a" stroke="#444" /><Plus /></S></div>
    <div className="mt-[8px]"><S s={24}><Post /></S></div>
    <div className="mt-[6px]"><S s={24}><Sheets /><Plus /></S></div>
    <div className="mt-[11px]"><S s={24}><GeoBlock /><Plus /></S></div>
    <div className="mt-[6px]"><S s={24}><Crown /><Plus /></S></div>
    <Sep2 cls="mt-[11px] mb-[12px]" />
    <S s={24}><rect x="3" y="1" width="11" height="24" fill="#d8d8d8" /><g fill="#fff" stroke="#c2c2c2"><rect x="12" y="7" width="16" height="23" /><path d="M15 12h3v3h-3zM15 18h3v3h-3zM15 24h3v3h-3zM20 14h5M20 20h5M20 26h5" /></g></S>
    <div className="mt-[7px]"><Caret /></div>
    <Sep2 cls="mt-[12px] mb-[13px]" />
    <S s={24}><Snake x={1} y={2} /><Refresh /></S>
    <div className="mt-[7px]"><S s={24}><MachineDim /><Check c="#b8b8b8" /></S></div>
    <div className="mt-[8px]"><S s={24}><Sim /><Check /></S></div>
    <div className="mt-[6px]"><S s={24}><Snake x={1} y={2} c="#c2c2c2" /><DocArrow c="#c2c2c2" /></S></div>
    <div className="mt-[12px]"><S s={24}><BlueFan /></S></div>
    <div className="mt-[2px]"><Caret /></div>
    <div className="mt-[11px]"><S s={24}><path d="M6 18l8-4V2h6v12l6 4v6l-10 6l-10-6z" fill="#d2d2d2" stroke="#bbb" /><Check c="#bbb" /></S></div>
    <Sep2 cls="mt-[8px]" />
    <svg width="5" height="8" viewBox="0 0 5 8" className="absolute left-[8px] bottom-[4px]"><path d="M5 0L0 4l5 4z" fill="#222" /></svg>
  </div>
);

const Triads = () => (
  <>
    <svg width="100" height="120" viewBox="0 0 100 120" className="absolute left-[69px] top-[584px]">
      <g fill="none" stroke="#b9b9b9" strokeWidth="1.2">
        <path d="M6 64l26-9l31 12l-30 9zM6 64v39l27 11l30-12V67M33 76v38" />
      </g>
      <path d="M35 66V24h-5l5-14l6 14h-5z" fill="#0b46c2" stroke="#0b46c2" strokeWidth="2" strokeLinejoin="round" />
      <path d="M64 77l0-5l14-3v-4l12 3l-12 7v-3z" fill="#3da246" />
      <path d="M47 89l2-4l22 11l3-3l6 11l-15-1l3-3z" fill="#d13a30" />
      <text x="35" y="9" textAnchor="middle" fontSize="12" fill="#3b55c8" fontFamily="Liberation Sans">Z</text>
      <text x="85" y="113" fontSize="12" fill="#c0453e" fontFamily="Liberation Sans">X</text>
    </svg>
    <svg width="120" height="190" viewBox="0 0 120 190" className="absolute left-[749px] top-[248px]">
      <g fill="none" stroke="#2e2eb8" strokeWidth="1" strokeDasharray="3 1">
        <path d="M7 75l52-16v60M7 75l43 20" />
        <path d="M59 120l42 20l-51 15" />
      </g>
      <path d="M50 95v60" stroke="#8a94d8" strokeWidth="1.2" />
      <path d="M7 136V22" stroke="#0a46c0" strokeWidth="2" />
      <path d="M7 22l-3 13h6zM7 55l-4 16h8z" fill="#0a46c0" />
      <path d="M1 136h12M7 130v11" stroke="#0a2a90" strokeWidth="2" />
      <path d="M7 136l75-22" stroke="#3c9c48" strokeWidth="2" />
      <path d="M70 122l20-11l-21 3z" fill="#46a850" />
      <path d="M88 111l22-5l-20 11z" fill="#1430d8" />
      <path d="M7 136l60 24" stroke="#c23a30" strokeWidth="2" />
      <path d="M60 156l24 10l-24-2z" fill="#d8443a" />
      <path d="M80 165l16 5l-14-9z" fill="#1430d8" />
      <g fontFamily="Liberation Sans" fontSize="13">
        <text x="1" y="19" fill="#3a48c8" fontSize="12">Z</text>
        <text x="14" y="42" fill="#5a6ac8">ZM</text>
        <text x="111" y="110" fill="#3a48c8">Y</text>
        <text x="71" y="108" fill="#6ca874">YM</text>
        <text x="57" y="181" fill="#d8605a">XM</text>
        <text x="92" y="183" fill="#3a48c8">X</text>
      </g>
    </svg>
  </>
);

const Canvas = () => (
  <div className="flex-1 min-w-0 flex flex-col">
    <div className="h-[25px] shrink-0 bg-white flex">
      <div className="w-[132px] bg-[#01618a] text-white text-[13px] flex items-center pl-[8px]">
        <svg width="14" height="16" viewBox="0 0 14 16"><path d="M6 1H1v5h5v5H1v4h5" fill="none" stroke="#fff" /><path d="M8 10a3 3 0 0 1 5-1M13 12a3 3 0 0 1-5 1" fill="none" stroke="#fff" /></svg>
        <span className="ml-[5px] font-['Liberation_Sans',sans-serif] tracking-[0.2px]">_model1.prt</span>
        <svg width="11" height="12" viewBox="0 0 11 12" className="ml-[8px]"><path d="M1 1h6l3 3v7H1z" fill="#fff" /><path d="M3 6h4v3" stroke="#01618a" fill="none" /></svg>
        <span className="ml-[5px] text-[#dbe7ec] font-bold text-[12px]">✕</span>
      </div>
    </div>
    <div className="h-[2px] shrink-0 bg-[#01618a]" />
    <div className="flex-1 min-h-0 relative overflow-hidden bg-[linear-gradient(180deg,#b3b4b7_0%,#d3d4d6_35%,#e2e3e5_65%,#e7e8e9_100%)]">
      <Triads />
      <span className="absolute right-[0px] bottom-[-36px] text-white opacity-50 font-bold text-[42px] tracking-[2px] whitespace-nowrap">3D世界网</span>
    </div>
  </div>
);

const RightBar = () => (
  <div className="w-[26px] shrink-0 bg-white flex flex-col items-center pt-[11px] relative text-[11px] text-[#222]">
    <span className="[writing-mode:vertical-rl] leading-none">常用工具</span>
    <span className="mt-[6px]"><Caret /></span>
    <svg width="5" height="8" viewBox="0 0 5 8" className="absolute left-[7px] bottom-[5px]"><path d="M5 0L0 4l5 4z" fill="#222" /></svg>
  </div>
);

const Section = ({ title, cls, children }: C & { title: string; cls: string }) => (
  <div className={`bg-white shadow-[0_1px_2px_#b0b0b0] mb-[3px] shrink-0 ${cls}`}>
    <div className="h-[28px] flex items-center pl-[8px] gap-[8px] text-[14px] text-[#1f7088]"><Tri /><span>{title}</span></div>
    {children}
  </div>
);
const Row = ({ label, cls, inner = "items-center gap-[3px]", children }: C & { label: string; cls: string; inner?: string }) => (
  <div className={`flex items-center justify-between pl-[9px] pr-[12px] ${cls}`}>
    <span className="whitespace-nowrap">{label}</span>
    <div className={`flex ${inner}`}>{children}</div>
  </div>
);
const Num = ({ v, cls = "" }: { v: string; cls?: string }) => (
  <div className={`w-[81px] h-[24px] bg-white border border-[#777] overflow-hidden flex items-center font-['Liberation_Mono',monospace] text-[14px] tracking-[0.3px] text-[#333] whitespace-nowrap ${cls}`}>{v}</div>
);

const selBase = "w-[140px] border-[#777]";
const tree = ["主要", "几何体", "轴和避让", "进给率", "策略", "非切削移动", "方法和公差", "刀具、程序和机床控制", "选项"];

const Dialog = () => (
  <div className="absolute left-[543px] top-[138px] w-[587px] h-[746px] bg-[#efefef] border border-[#d4d4d4] border-t-0 shadow-[0_2px_6px_rgba(0,0,0,.12)] flex flex-col text-[12px] text-[#222]">
    <div className="h-[24px] shrink-0 bg-[#01618a] text-white flex items-center pl-[6px] pr-[7px]">
      <svg width="14" height="14" viewBox="0 0 16 16"><circle cx="8" cy="8" r="4.4" fill="none" stroke="#fff" strokeWidth="2.6" /><path d="M8 0v3M8 13v3M0 8h3M13 8h3M2.3 2.3l2 2M11.7 11.7l2 2M13.7 2.3l-2 2M4.3 11.7l-2 2" stroke="#fff" strokeWidth="2.2" /></svg>
      <span className="ml-[8px] text-[14px] text-[#e7f0f4] whitespace-nowrap">旋转部件的粗加工 - [ROTARY_ROUGHING]</span>
      <span className="ml-auto font-bold text-[15px] font-['Liberation_Sans',sans-serif]">?</span>
      <svg width="13" height="13" viewBox="0 0 13 13" className="ml-[13px]"><path d="M1 1l11 11M12 1L1 12" stroke="#fff" strokeWidth="1.8" /></svg>
    </div>
    <div className="h-[34px] shrink-0 flex items-center pl-[9px] pr-[9px] pt-[3px]">
      <svg width="25" height="24" viewBox="0 0 25 24"><path d="M5 1h4v5h7V1h4v9l4 6v7h-9v-7l1-5h-7l1 5v7H1v-7l4-6z" fill="#fff" stroke="#333" /><path d="M1 16h9M15 16h9" stroke="#333" /></svg>
      <span className="ml-[2px]">查找</span>
      <div className="ml-[8px] flex-1 h-[22px] bg-white border border-[#888]" />
    </div>
    <div className="flex flex-1 min-h-0 pl-[12px] pr-[11px] pt-[7px]">
      <div className="w-[166px] h-[543px] bg-white border border-[#d8d8d8] shrink-0 overflow-hidden relative">
        <div className="absolute left-[10px] top-[10px] h-[161px] border-l border-dotted border-[#888]" />
        {Array.from({ length: 27 }, (_, i) => (
          <div key={i} className="h-[20px] flex items-center border-b border-[#ededed] pl-[20px] relative whitespace-nowrap">
            {i < 9 && <span className="absolute left-[11px] top-[10px] w-[8px] border-t border-dotted border-[#888]" />}
            {i === 5 && <span className="absolute left-[7px] top-[6px] w-[8px] h-[8px] bg-white text-[10px] leading-[7px] text-center text-[#222]">+</span>}
            {i < 9 && <span className={`pl-[3px] w-[144px] h-[19px] leading-[19px] ${i === 0 ? "bg-[#86bfd0]" : ""}`}>{tree[i]}</span>}
          </div>
        ))}
      </div>
      <div className="ml-[11px] w-[384px] flex flex-col -mt-[2px]">
        <Section title="主要" cls="h-[98px]">
          <Row label="刀具" cls="mt-[3px] !items-start leading-[25px]" inner="items-start gap-[2px]">
            <Sel cls="w-[117px] h-[25px] border-[#777]" text="NONE" />
            <div className="w-[32px] h-[31px] border border-[#777] bg-[#f1f1f1] flex items-center justify-center"><S s={26}><Mill y={6} /><rect x="16" y="1" width="8" height="20" fill="#777" /><path d="M13 14l4-2h3v10h-7z" fill="#ef8f20" /><Plus /></S></div>
            <div className="w-[32px] h-[31px] border border-[#ccc] bg-[#f4f4f4] flex items-center justify-center"><svg width="24" height="24" viewBox="0 0 24 24"><path d="M5 3h7l1 3l6 1l-2 4l4 5l-6 1l-2 5l-5-4l-5-1l3-6z" fill="#bdbdbd" /><circle cx="11" cy="12" r="3" fill="#d8d8d8" /></svg></div>
          </Row>
          <Row label="旋转轴" cls="mt-[3px]"><Sel cls={`${selBase} h-[25px]`} text="+ZM" /></Row>
        </Section>
        <Section title="深度模式" cls="h-[64px]">
          <Row label="旋转深度模式" cls="mt-[3px]"><Sel cls={`${selBase} h-[24px]`} text="圆柱形" /></Row>
        </Section>
        <Section title="范围定义" cls="h-[87px]">
          <Row label="距离" cls="mt-[3px]">
            <Num v="30.00000" cls="pl-[13px]" />
            <Sel cls="w-[62px] h-[25px] border-[#777]" text="% 刀刃" />
          </Row>
          <div className="flex items-center pl-[9px] mt-[3px]">
            <span className="w-[13px] h-[13px] border border-[#333] bg-white" />
            <span className="ml-[5px]">临界深度顶面切削</span>
          </div>
        </Section>
        <Section title="中间层" cls="h-[64px]">
          <Row label="自下而上切削" cls="mt-[3px]"><Sel cls={`${selBase} h-[24px]`} text="关" /></Row>
        </Section>
        <Section title="阵列" cls="h-[120px]">
          <Row label="切削模式" cls="mt-[3px]">
            <Sel cls={`${selBase} h-[26px]`} text="单向" icon={<svg width="16" height="18" viewBox="0 0 16 18"><path d="M0 3h14M0 9h14M0 15h14M14 1v16" stroke="#1a1a90" strokeWidth="1.2" /><path d="M12 1l4 2l-4 2zM12 7l4 2l-4 2zM12 13l4 2l-4 2z" fill="#1a1a90" /></svg>} />
          </Row>
          <Row label="切削类型" cls="mt-[2px]">
            <Sel cls={`${selBase} h-[26px]`} text="跟随部件/螺旋" icon={<svg width="16" height="18" viewBox="0 0 16 18"><path d="M1 1h14v12H1z" fill="none" stroke="#333" strokeDasharray="1 1" /><rect x="3" y="3" width="10" height="9" fill="none" stroke="#1a1a90" /><rect x="6" y="6" width="4" height="3" fill="none" stroke="#1a1a90" /><path d="M1 16h14" stroke="#c020c0" strokeDasharray="2 1" /></svg>} />
          </Row>
          <Row label="刀具接触偏移" cls="mt-[2px]">
            <Num v="0.00000" cls="pl-[22px]" />
            <Sel cls="w-[62px] h-[24px] border-[#777]" text="mm" />
          </Row>
        </Section>
        <Section title="步进" cls="h-[92px]">
          <Row label="步距" cls="mt-[3px]"><Sel cls={`${selBase} h-[24px]`} text="恒定" /></Row>
          <Row label="最大距离" cls="mt-[3px]">
            <Num v="20.00000" cls="pl-[13px]" />
            <Sel cls="w-[63px] h-[25px] border-[#777] !pr-[4px]" text="%刀具" />
            <div className="w-[23px] h-[25px] border border-[#777] bg-[#f6f6f6] flex items-center justify-center"><svg width="13" height="18" viewBox="0 0 13 18"><path d="M3 8V4a3.5 3.5 0 0 1 7 0v4M1 8h11v9H1z" fill="none" stroke="#333" /><circle cx="6.5" cy="12" r="1" fill="#333" /></svg></div>
          </Row>
        </Section>
      </div>
    </div>
    <div className="mx-[9px] h-[71px] shrink-0 bg-white border-b border-[#c8c8c8] flex flex-col absolute left-0 right-0 top-[611px] w-[567px]">
      <div className="h-[26px] flex items-center pl-[7px] gap-[8px] text-[14px] text-[#1f7088]"><Tri /><span>操作</span></div>
      <div className="flex items-center pl-[216px] gap-[2px] mt-[4px]">
        <div className="w-[32px] h-[32px] border border-[#444] flex items-center justify-center"><S s={28}><Snake x={2} y={2} /><Refresh /></S></div>
        <div className="w-[32px] h-[32px] border border-[#ccc] flex items-center justify-center"><S s={28}><Snake x={2} y={2} c="#bbb" /><path d="M16 26a6 6 0 0 1 11 0l1-3" fill="none" stroke="#bbb" /></S></div>
        <div className="w-[32px] h-[32px] border border-[#ccc] flex items-center justify-center"><S s={28}><path d="M3 14l9-4V3h7v7l8 4v10l-12 6L3 24z" fill="#b8b8b8" /><Check c="#999" /></S></div>
        <div className="w-[32px] h-[32px] border border-[#ccc] flex items-center justify-center"><S s={28}><g transform="translate(2 2)"><Doc /></g><Snake x={2} y={7} c="#bbb" k={.75} /><DocArrow c="#bbb" /></S></div>
        <div className="ml-[172px] w-[34px] h-[32px] bg-[#fdd76f] border-l-2 border-[#f6e9a8] flex items-center justify-center"><S s={28}><Snake x={4} y={4} c="#222" /><circle cx="22" cy="11" r="4" fill="none" stroke="#b32020" /><path d="M22 4v14M15 11h14" stroke="#b32020" /></S></div>
      </div>
    </div>
    <div className="absolute left-0 right-0 top-[682px] h-[20px] flex items-center justify-center pr-[1px]">
      <svg width="10" height="6" viewBox="0 0 10 6" className="mt-[8px]"><path d="M0 6l5-6l5 6z" fill="#111" /></svg>
    </div>
    <div className="absolute left-[5px] right-[5px] top-[702px] border-t border-[#cfcfcf]" />
    <div className="absolute right-[14px] top-[712px] flex gap-[5px]">
      <div className="w-[54px] h-[24px] bg-[#01618a] text-[#cfe4ec] flex items-center justify-center">确定</div>
      <div className="w-[54px] h-[24px] border border-[#01618a] text-[#1f7088] bg-[#f4f4f4] flex items-center justify-center">取消</div>
    </div>
  </div>
);

const Mini = ({ children }: C) => <div className="w-[36px] h-[31px] flex items-center justify-center shrink-0">{children}</div>;
const TreeMark = () => <path d="M20 10h6v5h-6zM20 20h6v5h-6zM23 15v5" fill="none" stroke="#222" strokeWidth="1.2" />;

const BottomBar = () => (
  <div className="h-[35px] shrink-0 bg-white border-b border-[#aaa] flex items-center pl-[7px]">
    <div className="w-[31px] h-[31px] bg-[#c9e2ea] border border-[#b5d6e0] flex items-center justify-center"><S s={26}><g stroke="#333" strokeWidth=".8" strokeDasharray="1 .5"><rect x="1" y="2" width="8" height="10" fill="#ddd" /><rect x="7" y="7" width="9" height="10" fill="#eee" /></g><TreeMark /></S></div>
    <Mini><S s={26}><path d="M1 6l8-4l8 3v8l-8 4l-8-3z" fill="#5e7cd8" /><rect x="3" y="8" width="7" height="6" fill="#e07a20" /><TreeMark /></S></Mini>
    <Mini><S s={26}><path d="M10 1h6v10h-6z" fill="#333" /><rect x="10" y="10" width="6" height="6" fill="#e8b040" /><path d="M5 14h6l-3 15H2z" fill="#5068b8" /><path d="M3 28L10 15" stroke="#fff" /><TreeMark /></S></Mini>
    <Mini><S s={26}><g fill="none" stroke="#18236a"><path d="M1 5q5 3 8 0t8 0t8 0M1 9h24M1 13q5 3 8 0t8 0t8 0M1 17h14" /></g><TreeMark /></S></Mini>
    <Mini><S s={26}><g fill="none" stroke="#222"><path d="M2 2h7v7H2zM2 12h7v7H2zM2 22h7v7H2zM4 5.500h3M4 15.500h3M4 25.500h3M5.500 4v3M5.500 14v3M5.500 24v3" /></g><path d="M13 3l4 3l-4 3zM13 13l4 3l-4 3z" fill="#d8842a" /><path d="M12 25h4" stroke="#222" /><rect x="17" y="22" width="4" height="8" fill="#5068b8" /><path d="M22 24l6-2" stroke="#222" /></S></Mini>
    <Mini><S s={26}><g fill="none" stroke="#222"><path d="M2 2h7v7H2zM2 12h7v7H2zM2 22h7v7H2zM4 5.500h3M4 15.500h3M4 25.500h3" /></g><path d="M17 3l-4 3l4 3zM17 13l-4 3l4 3z" fill="#d8842a" /><path d="M12 25h4" stroke="#222" /><rect x="17" y="22" width="4" height="8" fill="#5068b8" /><path d="M22 24l6-2" stroke="#222" /></S></Mini>
    <span className="w-[1px] h-[27px] bg-[#ddd] ml-[5px]" />
    <span className="ml-auto mr-[5px] mt-[12px]"><Caret /></span>
  </div>
);

const Watermark = () => (
  <svg width="74" height="84" viewBox="0 0 74 84" className="absolute left-[1636px] top-[952px] opacity-90">
    <path d="M37 1l36 20v41L37 82L1 62V21z" fill="#a9dcf6" />
    <path d="M37 1l36 20v41L37 82z" fill="#8ad2f4" />
    <path d="M1 21L37 1c10 6 18 12 24 20L37 8z" fill="#cfe9f7" />
    <path d="M18 32l19-11l19 11v22L37 65L18 54z" fill="#eef8fd" />
    <path d="M22 34l15-9l15 9l-15 8z" fill="#d4effb" />
    <path d="M22 34l15 8v19l-15-9z" fill="#b6e3f9" />
    <path d="M52 34l-15 8v19l15-9z" fill="#87d3f5" />
    <path d="M1 40q10-18 30-22M73 46q-10 18-30 20M21 58q5 20 16 24" fill="none" stroke="#eaf7fd" strokeWidth="1.5" />
  </svg>
);

const Ime = () => (
  <div className="absolute left-[1765px] top-[1015px] w-[155px] h-[25px] bg-white/90 border border-[#cfd6e4] flex items-center pl-[6px] gap-[13px] text-[#3c68c0]">
    <svg width="16" height="16" viewBox="0 0 16 16"><rect x="1" y="1" width="14" height="14" fill="#fff" stroke="#3c68c0" /><path d="M1 15V9q5 0 6 6zM7 9l6-6" stroke="#3c68c0" fill="#3c68c0" /></svg>
    <span className="text-[16px] font-bold leading-none w-[16px]">中</span>
    <svg width="14" height="14" viewBox="0 0 14 14"><path d="M9 0a7 7 0 0 1-9 10a7 7 0 0 0 13-1q1-5-4-9z" fill="#3c68c0" /></svg>
    <span className="flex items-start w-[13px] text-[13px] leading-none font-bold"><span className="w-[5px] h-[5px] rounded-full border border-[#3c68c0] mt-[1px]" /><span className="mt-[1px] ml-[1px]">,</span></span>
    <svg width="16" height="16" viewBox="0 0 16 16"><circle cx="8" cy="4" r="3" fill="#b7c9ee" /><path d="M1 15q1-6 7-6t7 6z" fill="#b7c9ee" /></svg>
    <svg width="15" height="15" viewBox="0 0 16 16"><circle cx="8" cy="8" r="4.2" fill="none" stroke="#3c68c0" strokeWidth="2.4" /><path d="M8 0v3M8 13v3M0 8h3M13 8h3M2.300 2.300l2 2M11.700 11.700l2 2M13.700 2.300l-2 2M4.300 11.700l-2 2" stroke="#3c68c0" strokeWidth="2" /></svg>
  </div>
);

export default function App() {
  return (
    <div className="relative w-[1920px] h-[1048px] overflow-hidden flex flex-col bg-white font-['Open_Sans','Noto_Sans_CJK_SC',sans-serif]">
      <Header />
      <Ribbon />
      <Toolbar />
      <div className="flex-1 min-h-0 flex">
        <LeftBar />
        <Nav />
        <SecondBar />
        <Canvas />
        <RightBar />
      </div>
      <BottomBar />
      <div className="h-[21px] shrink-0 bg-white pl-[3px] text-[11px] text-[#222] leading-[21px]">指定参数或选择路径</div>
      <div className="h-[8px] shrink-0 bg-[#21384a] flex pl-[361px] overflow-hidden relative">
        <div className="w-[158px] h-[8px] mt-[1px] bg-[#53636f]" />
        <div className="w-[158px] h-[8px] mt-[1px] ml-[3px] bg-[#75838b] border border-b-0 border-[#e8ecef]" />
        <span className="absolute left-[1461px] top-[4px] text-[11px] leading-[14px] text-white">4317</span>
        <span className="absolute left-[1801px] top-[4px] text-[12px] leading-[14px] text-white">21:03 周四</span>
      </div>
      <Watermark />
      <Ime />
      <Dialog />
    </div>
  );
}
